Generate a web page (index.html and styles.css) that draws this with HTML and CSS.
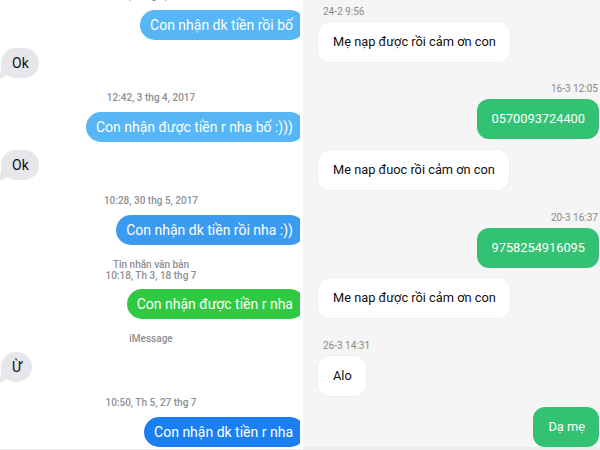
FILE: index.html
```html
<!DOCTYPE html>
<html lang="vi">
<head>
  <meta charset="UTF-8" />
  <title>Tin nhắn</title>
  <link rel="stylesheet" href="styles.css">
</head>
<body>
  <div class="screens">
    <div class="imsg">
      <p class="stamp cut">9:12, 2 thg 3, 2017</p>
      <div class="row out"><span class="bubble sky">Con nhận dk tiền rồi bố</span></div>
      <div class="row in gap-8"><span class="bubble gray">Ok</span></div>
      <p class="stamp gap-14">12:42, 3 thg 4, 2017</p>
      <div class="row out gap-6"><span class="bubble sky">Con nhận được tiền r nha bố :)))</span></div>
      <div class="row in gap-8"><span class="bubble gray">Ok</span></div>
      <p class="stamp gap-15">10:28, 30 thg 5, 2017</p>
      <div class="row out gap-7"><span class="bubble blue">Con nhận dk tiền rồi nha :))</span></div>
      <p class="stamp two gap-14">Tin nhắn văn bản<br>10:18, Th 3, 18 thg 7</p>
      <div class="row out gap-7"><span class="bubble sms">Con nhận được tiền r nha</span></div>
      <p class="stamp gap-14">iMessage</p>
      <div class="row in gap-7"><span class="bubble gray">Ừ</span></div>
      <p class="stamp gap-15">10:50, Th 5, 27 thg 7</p>
      <div class="row out gap-6"><span class="bubble deep">Con nhận dk tiền r nha</span></div>
    </div>

    <div class="chat">
      <p class="time gap-6">24-2 9:56</p>
      <div class="msg in gap-4"><span class="card">Mẹ nạp được rồi cảm ơn con</span></div>
      <p class="time right gap-21">16-3 12:05</p>
      <div class="msg out gap-4"><span class="card mine">0570093724400</span></div>
      <div class="msg in gap-11"><span class="card">Me nap đuoc rồi cảm ơn con</span></div>
      <p class="time right gap-22">20-3 16:37</p>
      <div class="msg out gap-4"><span class="card mine">9758254916095</span></div>
      <div class="msg in gap-10"><span class="card">Me nap được rồi cảm ơn con</span></div>
      <p class="time gap-22">26-3 14:31</p>
      <div class="msg in gap-4"><span class="card">Alo</span></div>
      <div class="msg out gap-11"><span class="card mine">Dạ mẹ</span></div>
    </div>
  </div>
</body>
</html>
```

FILE: styles.css
```css
body {
  margin: 0;
  background: #fff;
}
p {
  margin: 0;
}
.screens {
  display: flex;
  width: 600px;
  height: 450px;
  overflow: hidden;
}

/* left: iMessage */
.imsg {
  width: 303px;
  flex-shrink: 0;
  height: 450px;
  border-right: 3px solid #fff;
  border-bottom: 1px solid #ececec;
  box-sizing: border-box;
  overflow: hidden;
  background: #fff;
  font-family: Roboto, "Liberation Sans", sans-serif;
}
.stamp {
  height: 12px;
  line-height: 12px;
  font-size: 10px;
  font-weight: 500;
  color: #8e8e93;
  text-align: center;
  padding-left: 2px;
}
.stamp.cut {
  margin-top: -10px;
}
.stamp.two {
  height: 22px;
  line-height: 11px;
}
.row {
  display: flex;
}
.row.out {
  justify-content: flex-end;
  margin-top: 8px;
}
.row.in {
  justify-content: flex-start;
}
.bubble {
  display: block;
  height: 30px;
  line-height: 30px;
  font-size: 14px;
  white-space: nowrap;
  border-radius: 15px;
  position: relative;
}
.row.out .bubble {
  padding: 0 12px 0 10px;
  margin-right: -5px;
  color: #fff;
}
.sky { background: #57b6f6; }
.blue { background: #3b9bf1; }
.deep { background: #1b7ff2; }
.sms { background: #2fca42; }
.gray {
  background: #e6e6eb;
  color: #111;
  padding: 0 10px 0 11px;
  margin-left: 1px;
}
.gray::before {
  content: "";
  position: absolute;
  left: -3px;
  bottom: 0;
  width: 12px;
  height: 12px;
  background: #e6e6eb;
  border-bottom-right-radius: 10px 12px;
}
.gray::after {
  content: "";
  position: absolute;
  left: -8px;
  bottom: 0;
  width: 8px;
  height: 13px;
  background: #fff;
  border-bottom-right-radius: 8px 10px;
}

/* right: android chat */
.chat {
  flex: 1;
  height: 450px;
  background: #f5f5f5;
  border-bottom: 3px solid #ececec;
  box-sizing: border-box;
  padding: 0 1px 0 15px;
  font-family: Roboto, "Liberation Sans", sans-serif;
}
.time {
  height: 12px;
  line-height: 12px;
  font-size: 10px;
  color: #8a8a8a;
  padding-left: 5px;
}
.time.right {
  text-align: right;
  padding: 0 1px 0 0;
}
.msg {
  display: flex;
}
.msg.out {
  justify-content: flex-end;
}
.card {
  display: block;
  height: 40px;
  line-height: 40px;
  padding: 0 14px 0 15px;
  font-size: 12.8px;
  white-space: nowrap;
  border-radius: 12px;
  background: #fff;
  color: #111;
  box-shadow: 0 0 0 1px #eeeeee;
}
.card.mine {
  background: #33c273;
  color: #fff;
  box-shadow: none;
}

.gap-4 { margin-top: 4px; }
.gap-6 { margin-top: 6px; }
.gap-7 { margin-top: 7px; }
.gap-8 { margin-top: 8px; }
.gap-10 { margin-top: 10px; }
.gap-11 { margin-top: 11px; }
.gap-14 { margin-top: 14px; }
.gap-15 { margin-top: 15px; }
.gap-21 { margin-top: 21px; }
.gap-22 { margin-top: 22px; }
```
